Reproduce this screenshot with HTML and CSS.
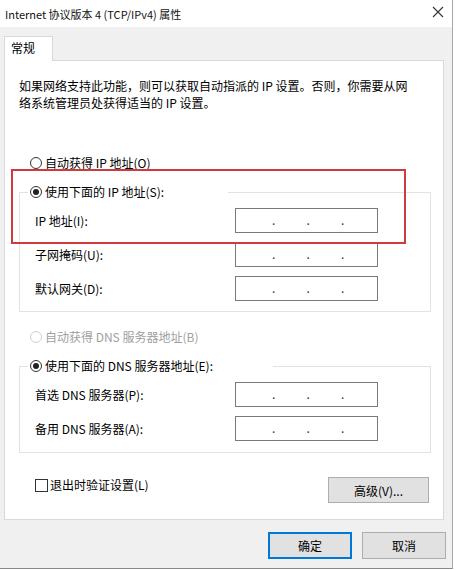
FILE: index.html
```html
<!DOCTYPE html>
<html lang="zh-CN">
<head>
<meta charset="utf-8">
<title>Internet 协议版本 4 (TCP/IPv4) 属性</title>
<link rel="stylesheet" href="styles.css">
</head>
<body>
<div class="window">
  <div class="titlebar">
    <span class="title">Internet 协议版本 4 (TCP/IPv4) 属性</span>
    <svg class="close" width="12" height="12" viewBox="0 0 12 12"><path d="M1 1 L11 11 M11 1 L1 11" stroke="#333" stroke-width="1.1" fill="none"/></svg>
  </div>
  <div class="body">
    <div class="tabs"><div class="tab">常规</div></div>
    <div class="panel">
      <p class="desc">如果网络支持此功能，则可以获取自动指派的 IP 设置。否则，你需要从网络系统管理员处获得适当的 IP 设置。</p>
      <div class="option"><span class="radio"></span>自动获得 IP 地址(O)</div>
      <fieldset class="group">
        <legend class="legend legend-ip"><span class="radio checked"></span>使用下面的 IP 地址(S):</legend>
        <div class="row"><span class="label">IP 地址(I):</span><div class="ipbox"><span>.</span><span>.</span><span>.</span></div></div>
        <div class="row"><span class="label">子网掩码(U):</span><div class="ipbox"><span>.</span><span>.</span><span>.</span></div></div>
        <div class="row"><span class="label">默认网关(D):</span><div class="ipbox"><span>.</span><span>.</span><span>.</span></div></div>
      </fieldset>
      <div class="option option-dns disabled"><span class="radio"></span>自动获得 DNS 服务器地址(B)</div>
      <fieldset class="group group-dns">
        <legend class="legend legend-dns"><span class="radio checked"></span>使用下面的 DNS 服务器地址(E):</legend>
        <div class="row"><span class="label">首选 DNS 服务器(P):</span><div class="ipbox"><span>.</span><span>.</span><span>.</span></div></div>
        <div class="row"><span class="label">备用 DNS 服务器(A):</span><div class="ipbox"><span>.</span><span>.</span><span>.</span></div></div>
      </fieldset>
      <div class="bottom-row">
        <div class="check"><span class="checkbox"></span>退出时验证设置(L)</div>
        <div class="btn btn-adv">高级(V)...</div>
      </div>
    </div>
    <div class="actions">
      <div class="btn btn-ok">确定</div>
      <div class="btn btn-cancel">取消</div>
    </div>
  </div>
  <div class="highlight"></div>
</div>
</body>
</html>
```
FILE: styles.css
```css
* { box-sizing: border-box; }
html, body { margin: 0; padding: 0; background: #ffffff; }
body {
  font-family: "Noto Sans CJK SC", "Noto Sans", sans-serif;
  font-size: 12px;
  color: #000;
}
.window {
  position: relative;
  width: 453px;
  height: 569px;
  border-right: 1px solid #a8a8a8;
  border-bottom: 1px solid #8a8a8a;
  background: #f0f0f0;
  display: flex;
  flex-direction: column;
}
.titlebar {
  height: 27px;
  background: #ffffff;
  display: flex;
  align-items: center;
  padding-left: 5px;
}
.title { font-size: 11px; line-height: 16px; padding-top: 1px; color: #111; }
.close { margin-left: auto; margin-right: 8px; margin-top: -4px; }
.body { flex: 1; display: flex; flex-direction: column; }
.tabs { display: flex; padding-left: 4px; margin-top: 9px; }
.tab {
  position: relative;
  z-index: 1;
  width: 49px;
  height: 25px;
  margin-bottom: -1px;
  background: #fff;
  border: 1px solid #d9d9d9;
  border-bottom: none;
  padding-left: 6px;
  line-height: 22px;
}
.panel {
  margin-left: 4px;
  width: 440px;
  height: 460px;
  background: #fff;
  border: 1px solid #d9d9d9;
  padding: 16px 12px 0 14px;
  display: flex;
  flex-direction: column;
}
.desc { margin: 0; line-height: 17px; padding-right: 20px; }
.option {
  display: flex;
  align-items: center;
  height: 16px;
  line-height: 16px;
  margin-top: 44px;
  margin-left: 11px;
}
.option-dns { margin-top: 17px; }
.disabled { color: #a0a0a0; }
.radio {
  width: 12px;
  height: 12px;
  border: 1px solid #333;
  border-radius: 50%;
  background: #fff;
  margin-right: 3px;
  display: flex;
  align-items: center;
  justify-content: center;
  flex: none;
}
.disabled .radio { border-color: #cfcfcf; }
.radio.checked::after {
  content: "";
  width: 6px;
  height: 6px;
  border-radius: 50%;
  background: #222;
}
.group {
  margin: 13px 0 0 0;
  padding: 0 0 10px 0;
  border: 1px solid #e2e2e2;
  min-width: 0;
}
.group-dns { padding-bottom: 11px; }
.legend {
  display: flex;
  align-items: center;
  height: 16px;
  line-height: 16px;
  padding: 0 0 0 2px;
  margin-left: 8px;
  background: #fff;
}
.legend-ip { width: 200px; }
.legend-dns { width: 245px; }
.row {
  display: flex;
  align-items: center;
  margin-top: 9px;
  padding-left: 15px;
}
.legend + .row { margin-top: 8px; }
.label { width: 200px; }
.ipbox {
  width: 143px;
  height: 25px;
  border: 1px solid #7a7a7a;
  background: #fff;
  display: flex;
  padding-left: 36px;
  line-height: 21px;
  color: #333;
}
.ipbox span { width: 34.5px; }
.bottom-row {
  display: flex;
  align-items: flex-start;
  margin-top: 24px;
}
.check {
  display: flex;
  align-items: center;
  margin-left: 16px;
  line-height: 16px;
}
.checkbox {
  width: 13px;
  height: 13px;
  border: 1px solid #333;
  background: #fff;
  margin-right: 2px;
}
.btn {
  display: flex;
  align-items: center;
  justify-content: center;
  background: #e1e1e1;
  border: 1px solid #adadad;
}
.btn-adv {
  margin-left: auto;
  margin-right: 2px;
  width: 101px;
  height: 26px;
}
.actions {
  display: flex;
  justify-content: flex-end;
  gap: 10px;
  margin-top: 12px;
  padding-right: 6px;
}
.btn-ok, .btn-cancel { width: 84px; height: 27px; }
.btn-ok {
  border-color: #0078d7;
  box-shadow: inset 0 0 0 1px #0078d7;
}
.highlight {
  position: absolute;
  left: 11px;
  top: 169px;
  width: 395px;
  height: 75px;
  border: 2px solid #cf3a3c;
  pointer-events: none;
}
```
